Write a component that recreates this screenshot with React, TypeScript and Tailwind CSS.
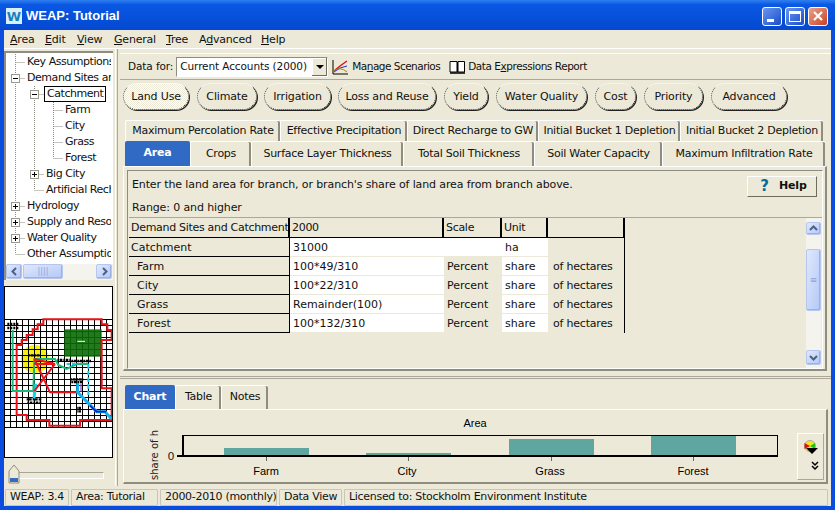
import type { ReactNode } from 'react';

// ── tree ────────────────────────────────────────────────
type TreeRow = {
  label: string;
  textX: number;
  full?: number[];
  half?: number[];
  conn?: [number, number];
  box?: { x: number; open: boolean };
  selected?: boolean;
};

const TREE: TreeRow[] = [
  { label: 'Key Assumptions', textX: 27, full: [15], conn: [15, 25] },
  { label: 'Demand Sites and Catchments', textX: 27, full: [15], conn: [15, 25], box: { x: 15, open: true } },
  { label: 'Catchment', textX: 46, full: [15, 34], conn: [34, 44], box: { x: 34, open: true }, selected: true },
  { label: 'Farm', textX: 65, full: [15, 34, 53], conn: [53, 63] },
  { label: 'City', textX: 65, full: [15, 34, 53], conn: [53, 63] },
  { label: 'Grass', textX: 65, full: [15, 34, 53], conn: [53, 63] },
  { label: 'Forest', textX: 65, full: [15, 34], half: [53], conn: [53, 63] },
  { label: 'Big City', textX: 46, full: [15, 34], conn: [34, 44], box: { x: 34, open: false } },
  { label: 'Artificial Recharge', textX: 46, full: [15], half: [34], conn: [34, 44] },
  { label: 'Hydrology', textX: 27, full: [15], conn: [15, 25], box: { x: 15, open: false } },
  { label: 'Supply and Resources', textX: 27, full: [15], conn: [15, 25], box: { x: 15, open: false } },
  { label: 'Water Quality', textX: 27, full: [15], conn: [15, 25], box: { x: 15, open: false } },
  { label: 'Other Assumptions', textX: 27, half: [15], conn: [15, 25] },
];

function TreeLine({ row }: { row: TreeRow }) {
  // row x values are window pixels, the tree's content starts at x=6
  const ox = (x: number) => x - 5.5;
  return (
    <div className="flex h-4 items-center whitespace-nowrap tracking-[-0.45px]">
      <svg width={row.textX - 8} height={16} className="shrink-0">
        {(row.full ?? []).map((x) => (
          <line key={x} x1={ox(x)} y1={0} x2={ox(x)} y2={16} stroke="#8a8a80" strokeDasharray="1 1" />
        ))}
        {(row.half ?? []).map((x) => (
          <line key={x} x1={ox(x)} y1={0} x2={ox(x)} y2={8} stroke="#8a8a80" strokeDasharray="1 1" />
        ))}
        {row.conn ? (
          <line x1={ox(row.conn[0])} y1={8.5} x2={ox(row.conn[1])} y2={8.5} stroke="#8a8a80" strokeDasharray="1 1" />
        ) : null}
        {row.box ? (
          <g>
            <rect x={ox(row.box.x) - 4} y={4.5} width={8} height={8} fill="#fff" stroke="#9a9a8c" />
            <line x1={ox(row.box.x) - 2.5} y1={8.5} x2={ox(row.box.x) + 2.5} y2={8.5} stroke="#000" />
            {row.box.open ? null : <line x1={ox(row.box.x)} y1={6} x2={ox(row.box.x)} y2={11} stroke="#000" />}
          </g>
        ) : null}
      </svg>
      <span className={row.selected ? 'border border-black px-[2px] leading-[14px]' : 'pl-[2px]'}>{row.label}</span>
    </div>
  );
}

function XpArrow({ dir }: { dir: 'up' | 'down' | 'left' | 'right' }) {
  const d = {
    up: 'M2 7 L5.5 3.5 L9 7',
    down: 'M2 4 L5.5 7.5 L9 4',
    left: 'M7 2 L3.5 5.5 L7 9',
    right: 'M4 2 L7.5 5.5 L4 9',
  }[dir];
  return (
    <svg width={11} height={11}>
      <path d={d} fill="none" stroke="#4d6185" strokeWidth={2} />
    </svg>
  );
}

const SB_BTN =
  'flex items-center justify-center rounded-[2px] border border-[#b5c7ee] bg-gradient-to-br from-[#dfe8fd] to-[#b4c8f6] shadow-[inset_-1px_-1px_0_#9db2e3]';

// ── map thumbnail, coordinates follow the 3x crop of the picture ─────────
function MapThumb() {
  const xs = Array.from({ length: 19 }, (_, i) => 13.5 + i * 18);
  const ys = Array.from({ length: 19 }, (_, i) => 103.5 + i * 18);
  const labels = [
    [22, 117, 56], [22, 129, 56], [86, 211, 122], [172, 225, 212], [214, 228, 274],
    [212, 283, 250], [214, 291, 248], [80, 343, 124], [82, 353, 126], [228, 369, 248], [228, 379, 248],
  ];
  return (
    <svg viewBox="12 3 327 516" className="h-full w-full">
      <rect x={12} y={3} width={327} height={516} fill="#fff" />
      <circle cx={105} cy={222} r={42} fill="#f5ef14" />
      {xs.map((x) => (
        <line key={x} x1={x} y1={103} x2={x} y2={427} stroke="#000" strokeWidth={3} />
      ))}
      {ys.map((y) => (
        <line key={y} x1={14} y1={y} x2={337} y2={y} stroke="#000" strokeWidth={3} />
      ))}
      <rect x={193} y={133} width={112} height={82} fill="#0b6b05" fillOpacity={0.9} />
      <path d="M232 169 H255" stroke="#fff" strokeWidth={3} />
      <path
        d="M130 103 H305 V118 H322 V135 H335 V165 H305 V310 H335 V405 H240 V422 H148 V405 H80 V390 H50 V180 H65 V165 H80 V150 H98 V133 H113 V118 H130 Z"
        fill="none"
        stroke="#e8101a"
        strokeWidth={6}
      />
      <path d="M100 296 H112 L106 342 H98 Z" fill="#16d3e8" />
      <path d="M38 135 V318 H100 L103 222 H165 L175 240 L200 252 L230 237 H265" fill="none" stroke="#18b878" strokeWidth={6} />
      <path
        d="M103 222 L165 237 H103 M103 222 L150 322 H240 M165 237 L103 318"
        fill="none"
        stroke="#f0101a"
        strokeWidth={6}
      />
      <path d="M265 237 V330" fill="none" stroke="#18c8f0" strokeWidth={6} strokeDasharray="14 6" />
      <path d="M200 237 H225" fill="none" stroke="#18c8f0" strokeWidth={6} strokeDasharray="10 6" />
      <path d="M233 295 V322 L290 380 H315 L335 402" fill="none" stroke="#13b4ee" strokeWidth={9} />
      <path d="M270 362 L290 380 H318" fill="none" stroke="#1018d8" strokeWidth={5} />
      <path d="M243 296 V320" stroke="#a050d0" strokeWidth={4} />
      {labels.map(([x, y, x2]) => (
        <line key={`${x}-${y}`} x1={x} y1={y} x2={x2} y2={y} stroke="#000" strokeWidth={7} strokeDasharray="5 2 8 3" />
      ))}
      <rect x={13.5} y={4.5} width={324} height={513} fill="none" stroke="#000" strokeWidth={3} />
    </svg>
  );
}

// ── buttons and tabs ─────────────────────────────────────
const PILLS: { label: string; width: string; gap: string; selected?: boolean }[] = [
  { label: 'Land Use', width: 'w-[66px]', gap: 'ml-[3px]', selected: true },
  { label: 'Climate', width: 'w-[60px]', gap: 'ml-[8px]' },
  { label: 'Irrigation', width: 'w-[67px]', gap: 'ml-[7px]' },
  { label: 'Loss and Reuse', width: 'w-[98px]', gap: 'ml-[7px]' },
  { label: 'Yield', width: 'w-[44px]', gap: 'ml-[8px]' },
  { label: 'Water Quality', width: 'w-[91px]', gap: 'ml-[8px]' },
  { label: 'Cost', width: 'w-[41px]', gap: 'ml-[8px]' },
  { label: 'Priority', width: 'w-[59px]', gap: 'ml-[8px]' },
  { label: 'Advanced', width: 'w-[76px]', gap: 'ml-[8px]' },
];

const TOP_TABS = [
  { label: 'Maximum Percolation Rate', width: 'w-[155px]' },
  { label: 'Effective Precipitation', width: 'w-[127px]' },
  { label: 'Direct Recharge to GW', width: 'w-[131px]' },
  { label: 'Initial Bucket 1 Depletion', width: 'w-[142px]' },
  { label: 'Initial Bucket 2 Depletion', width: 'w-[143px]' },
];

const BOTTOM_TABS = [
  { label: 'Area', width: 'w-[65px]', selected: true },
  { label: 'Crops', width: 'w-[61px]' },
  { label: 'Surface Layer Thickness', width: 'w-[152px]' },
  { label: 'Total Soil Thickness', width: 'w-[131px]' },
  { label: 'Soil Water Capacity', width: 'w-[128px]' },
  { label: 'Maximum Infiltration Rate', width: 'w-[163px]' },
];

function Tab({ label, width, selected, height }: { label: string; width: string; selected?: boolean; height: string }) {
  return (
    <div
      className={`flex shrink-0 items-center justify-center whitespace-nowrap rounded-t-[2px] tracking-[-0.25px] ${width} ${height} ${
        selected
          ? 'bg-[#316ac5] font-bold text-white'
          : 'border-l border-t border-l-white border-t-white shadow-[inset_-2px_0_0_#8f8d80]'
      }`}
    >
      {label}
    </div>
  );
}

function HeadCell({ children }: { children: ReactNode }) {
  return (
    <div className="flex h-[19px] items-center overflow-hidden whitespace-nowrap border-r-2 border-black pl-[2px] pt-[2px] tracking-[-0.3px]">
      {children}
    </div>
  );
}

const ROWS = [
  { name: 'Farm', expr: '100*49/310' },
  { name: 'City', expr: '100*22/310' },
  { name: 'Grass', expr: 'Remainder(100)' },
  { name: 'Forest', expr: '100*132/310' },
];

function StatusCell({ children, width }: { children: ReactNode; width: string }) {
  return (
    <div className={`flex h-[17px] shrink-0 items-center whitespace-nowrap rounded-[1px] border border-[#c9c6b4] pl-[4px] tracking-[-0.3px] ${width}`}>
      {children}
    </div>
  );
}

function TitleButton({ children, red }: { children: ReactNode; red?: boolean }) {
  return (
    <div
      className={`flex h-[19px] w-[20px] items-center justify-center rounded-[3px] border border-white ${
        red ? 'bg-gradient-to-br from-[#e8a08a] to-[#c8401c]' : 'bg-gradient-to-br from-[#6a96f0] to-[#1a4cc8]'
      }`}
    >
      {children}
    </div>
  );
}

export default function App() {
  return (
    <div className="flex h-[510px] w-[835px] flex-col overflow-hidden bg-[#0a4be0] font-['DejaVu_Sans',sans-serif] text-[11px] text-[#111]">
      {/* title bar */}
      <div className="flex h-[30px] shrink-0 items-center bg-gradient-to-b from-[#3080f0] from-0% via-[#0a58e4] via-15% to-[#0448d0] pl-[6px] pr-[7px] pt-[2px]">
        <div className="flex h-[16px] w-[16px] items-center justify-center bg-[#d8f0f8] text-[13px] font-bold leading-none text-[#1a7fc0]">W</div>
        <span className="ml-[4px] font-['Liberation_Sans',sans-serif] text-[13px] font-bold text-white">WEAP: Tutorial</span>
        <div className="ml-auto flex gap-[3px]">
          <TitleButton>
            <span className="mr-[4px] mt-[9px] h-[3px] w-[7px] bg-white" />
          </TitleButton>
          <TitleButton>
            <span className="h-[11px] w-[12px] border border-t-[3px] border-white" />
          </TitleButton>
          <TitleButton red>
            <svg width={12} height={12}>
              <path d="M2 2 L10 10 M10 2 L2 10" stroke="#fff" strokeWidth={2.2} />
            </svg>
          </TitleButton>
        </div>
      </div>

      <div className="mx-[4px] flex min-h-0 flex-1 flex-col bg-[#ece9d8]">
        {/* menu */}
        <div className="flex h-[18px] shrink-0 items-center pl-[6px] pt-[2px] tracking-[-0.2px]">
          <span className="w-[35px]"><u>A</u>rea</span>
          <span className="w-[32px]"><u>E</u>dit</span>
          <span className="w-[37px]"><u>V</u>iew</span>
          <span className="w-[52px]"><u>G</u>eneral</span>
          <span className="w-[33px]"><u>T</u>ree</span>
          <span className="w-[62px]">A<u>d</u>vanced</span>
          <span><u>H</u>elp</span>
        </div>
        <div className="h-[1px] shrink-0 bg-white" />

        <div className="flex min-h-0 flex-1">
          {/* left column */}
          <div className="flex w-[109px] shrink-0 flex-col pt-[2px]">
            <div className="flex h-[229px] shrink-0 flex-col border-l-2 border-t-2 border-l-[#8f8d80] border-t-[#8f8d80] bg-white">
              <div className="h-[211px] w-[105px] shrink-0 overflow-hidden pt-[1px]">
                {TREE.map((row) => (
                  <TreeLine key={row.label} row={row} />
                ))}
              </div>
              <div className="flex h-[16px] shrink-0 bg-[#f4f3ee]">
                <div className={`h-[15px] w-[16px] ${SB_BTN}`}>
                  <XpArrow dir="left" />
                </div>
                <div className={`ml-[1px] h-[15px] w-[40px] ${SB_BTN}`}>
                  <span className="text-[8px] leading-none text-[#8ea4d8]">||||</span>
                </div>
                <div className={`ml-auto mr-[1px] h-[15px] w-[16px] ${SB_BTN}`}>
                  <XpArrow dir="right" />
                </div>
              </div>
            </div>
            <div className="mt-[6px] h-[172px] shrink-0">
              <MapThumb />
            </div>
            <div className="relative mt-[6px] h-[22px] shrink-0">
              <div className="absolute left-[9px] top-[8px] h-[7px] w-[91px] border border-b-white border-l-[#a8a698] border-r-white border-t-[#a8a698]" />
              <svg width={12} height={20} className="absolute left-[4px] top-0">
                <path d="M1 7 L6 1 L11 7 V19 H1 Z" fill="#ece9d8" stroke="#8f8d80" />
                <rect x={2} y={14} width={8} height={4} fill="#3a6ac0" />
              </svg>
            </div>
          </div>

          {/* splitter */}
          <div className="mx-[2px] w-[3px] shrink-0 border-l border-r border-l-white border-r-[#aca899]" />

          {/* right column */}
          <div className="flex min-w-0 flex-1 flex-col">
            {/* toolbar */}
            <div className="mt-[4px] flex h-[27px] shrink-0 items-center border-b border-t border-b-[#aca899] border-t-white pl-[8px] text-[10.5px] tracking-[-0.1px]">
              <span>Data for:</span>
              <div className="ml-[3px] flex h-[20px] w-[152px] items-center justify-between border border-b-white border-l-[#8f8d80] border-r-white border-t-[#8f8d80] bg-white pl-[3px]">
                <span className="whitespace-nowrap">Current Accounts (2000)</span>
                <div className="flex h-[18px] w-[15px] items-center justify-center bg-[#ece9d8] shadow-[inset_-1px_-1px_0_#6e6c60,inset_1px_1px_0_#fff]">
                  <span className="h-0 w-0 border-x-[4px] border-t-[4px] border-x-transparent border-t-black" />
                </div>
              </div>
              <svg width={16} height={16} className="ml-[4px]">
                <path d="M1 1 V15 H16" fill="none" stroke="#000" />
                <path d="M2 12 L8 7 L15 2" fill="none" stroke="#e01010" strokeWidth={1.4} />
                <path d="M2 13 L8 9 L15 7" fill="none" stroke="#2030d0" />
                <path d="M2 12 Q8 7 15 13" fill="none" stroke="#a08a00" />
              </svg>
              <span className="ml-[4px] whitespace-nowrap tracking-[-0.52px]">Ma<u>n</u>age Scenarios</span>
              <svg width={17} height={14} className="ml-[9px]">
                <path d="M1 1.5 H8 V12 H1 Z M9 1.5 H15.5 V12 H9 Z" fill="#fff" stroke="#000" />
                <path d="M1 13 H16" stroke="#000" strokeWidth={1.5} />
                <path d="M8.5 2 V12" stroke="#000" />
              </svg>
              <span className="ml-[2px] whitespace-nowrap tracking-[-0.45px]">Data E<u>x</u>pressions Report</span>
            </div>

            {/* pills */}
            <div className="flex h-[40px] shrink-0 items-start pt-[3px]">
              {PILLS.map((p) => (
                <div
                  key={p.label}
                  className={`flex h-[27px] shrink-0 items-center justify-center whitespace-nowrap rounded-full border border-dotted border-b-[#222] border-l-[#555] border-r-[#222] border-t-white pt-[2px] tracking-[-0.15px] shadow-[1px_1px_0_#222] ${p.width} ${p.gap} ${
                    p.selected ? 'bg-[repeating-conic-gradient(#ffffff_0_25%,#ece9d8_0_50%)] bg-[length:2px_2px]' : ''
                  }`}
                >
                  {p.label}
                </div>
              ))}
            </div>

            {/* tabs */}
            <div className="ml-[5px] flex shrink-0">
              {TOP_TABS.map((t) => (
                <Tab key={t.label} label={t.label} width={t.width} height="h-[21px]" />
              ))}
            </div>
            <div className="ml-[5px] flex shrink-0">
              {BOTTOM_TABS.map((t) => (
                <Tab key={t.label} label={t.label} width={t.width} selected={t.selected} height="h-[25px]" />
              ))}
            </div>

            {/* upper panel */}
            <div className="ml-[3px] flex h-[205px] w-[704px] shrink-0 flex-col border-b-2 border-l border-r-2 border-t border-b-[#8f8d80] border-l-white border-r-[#8f8d80] border-t-white pl-[3px] pr-[2px] pt-[3px]">
              <div className="flex min-h-0 flex-1 flex-col border border-b-white border-l-[#8f8d80] border-r-white border-t-[#8f8d80] pl-[1px]">
                <div className="relative h-[47px] shrink-0 border-b border-b-[#aca899] pl-[3px] pt-[6px] tracking-[-0.12px]">
                  <div className="leading-[15px]">Enter the land area for branch, or branch's share of land area from branch above.</div>
                  <div className="mt-[8px] leading-[15px]">Range: 0 and higher</div>
                  <div className="absolute right-[5px] top-[5px] flex h-[21px] w-[70px] items-center justify-center gap-[10px] border border-b-[#6e6c60] border-l-white border-r-[#6e6c60] border-t-white pl-[3px] font-bold">
                    <span className="text-[15px] font-bold leading-none text-[#0a6a9a]">?</span>
                    <span>Help</span>
                  </div>
                </div>
                <div className="flex min-h-0 flex-1">
                  <div className="grid w-[496px] shrink-0 grid-cols-[161px_154px_58px_46px_77px] content-start">
                    <HeadCell>Demand Sites and Catchment</HeadCell>
                    <HeadCell>2000</HeadCell>
                    <HeadCell>Scale</HeadCell>
                    <HeadCell>Unit</HeadCell>
                    <HeadCell>&nbsp;</HeadCell>
                    <div className="col-span-5 h-[1px] bg-black" />

                    <div className="flex h-[19px] items-center border-b border-r border-black pl-[2px] pt-[2px]">Catchment</div>
                    <div className="col-span-3 flex h-[19px] items-center border-b border-[#ece9d8] bg-white pt-[2px]">
                      <span className="w-[212px] pl-[3px]">31000</span>
                      <span className="pl-[3px]">ha</span>
                    </div>
                    <div className="border-r border-black" />

                    {ROWS.map((r) => (
                      <div key={r.name} className="contents">
                        <div className="flex h-[19px] items-center border-b border-r border-black pl-[8px] pt-[2px]">{r.name}</div>
                        <div className="flex h-[19px] items-center border-b border-[#ece9d8] bg-white pl-[3px] pt-[2px]">{r.expr}</div>
                        <div className="flex h-[19px] items-center pl-[3px] pt-[2px]">Percent</div>
                        <div className="flex h-[19px] items-center border-b border-[#ece9d8] bg-white pl-[3px] pt-[2px]">share</div>
                        <div className="flex h-[19px] items-center whitespace-nowrap border-r border-black pl-[5px] pt-[2px] tracking-[-0.2px]">of hectares</div>
                      </div>
                    ))}
                  </div>
                  <div className="ml-auto mr-[1px] flex w-[15px] shrink-0 flex-col bg-[#f4f3ee] pb-[3px] pt-[4px]">
                    <div className={`h-[13px] shrink-0 ${SB_BTN}`}>
                      <XpArrow dir="up" />
                    </div>
                    <div className={`mt-[14px] h-[62px] shrink-0 ${SB_BTN}`}>
                      <span className="text-[9px] leading-none text-[#8ea4d8]">≡</span>
                    </div>
                    <div className={`mt-auto h-[15px] shrink-0 ${SB_BTN}`}>
                      <XpArrow dir="down" />
                    </div>
                  </div>
                </div>
              </div>
            </div>

            {/* horizontal splitter */}
            <div className="mt-[5px] h-[3px] w-full shrink-0 border-y border-y-[#aca899]" />

            {/* lower tabs */}
            <div className="ml-[5px] mt-[6px] flex shrink-0">
              <Tab label="Chart" width="w-[50px]" selected height="h-[24px]" />
              <Tab label="Table" width="w-[46px]" height="h-[24px]" />
              <Tab label="Notes" width="w-[47px]" height="h-[24px]" />
            </div>

            {/* lower panel */}
            <div className="ml-[3px] flex h-[75px] w-[705px] shrink-0 border-b-2 border-l border-r-2 border-t border-b-[#8f8d80] border-l-white border-r-[#8f8d80] border-t-white">
              <svg width={670} height={72} className="shrink-0 font-['Liberation_Sans',sans-serif]">
                <text x={351} y={17} fontSize={11} textAnchor="middle" fill="#000">Area</text>
                <text transform="translate(34 70) rotate(-90)" fontSize={10} fill="#222" fontFamily="DejaVu Sans">share of h</text>
                <text x={47} y={50} fontSize={11} textAnchor="middle" fill="#222" fontFamily="DejaVu Sans">0</text>
                <rect x={58.5} y={25.5} width={595} height={20} fill="none" stroke="#000" />
                <path d="M59 25 V47 M53 46 H654" stroke="#000" strokeWidth={2} fill="none" />
                <rect x={100} y={38} width={85} height={7} fill="#5fa5a0" />
                <rect x={242} y={43} width={85} height={2} fill="#5fa5a0" />
                <rect x={385} y={29} width={85} height={16} fill="#5fa5a0" />
                <rect x={527} y={26} width={85} height={19} fill="#5fa5a0" />
                <path d="M142.5 47 V51 M284.5 47 V51 M427.5 47 V51 M569.5 47 V51" stroke="#666" />
                <text x={142} y={65} fontSize={11} textAnchor="middle" fill="#000">Farm</text>
                <text x={283} y={65} fontSize={11} textAnchor="middle" fill="#000">City</text>
                <text x={426} y={65} fontSize={11} textAnchor="middle" fill="#000">Grass</text>
                <text x={569} y={65} fontSize={11} textAnchor="middle" fill="#000">Forest</text>
              </svg>
              <div className="ml-[3px] mt-[23px] flex h-[47px] w-[27px] shrink-0 flex-col items-center border border-b-[#aca899] border-l-white border-r-[#aca899] border-t-white">
                <svg width={16} height={16} className="mt-[5px]">
                  <circle cx={7} cy={7} r={5.5} fill="#f0e820" stroke="#aaa" />
                  <path d="M7 7 L1.5 4 V10 Z" fill="#e01010" />
                  <path d="M7 7 L12 4 V10 Z" fill="#20c020" />
                  <path d="M3 9 H15 L9 15 Z" fill="#000" />
                </svg>
                <svg width={8} height={10} className="ml-[8px] mt-[6px]">
                  <path d="M1 1 L4 4 L7 1 M1 5 L4 8 L7 5" fill="none" stroke="#000" strokeWidth={1.5} />
                </svg>
              </div>
            </div>
          </div>
        </div>

        {/* status bar */}
        <div className="flex h-[20px] shrink-0 items-center gap-[2px] pl-[1px] pt-[2px]">
          <StatusCell width="w-[64px]">WEAP: 3.4</StatusCell>
          <StatusCell width="w-[87px]">Area: Tutorial</StatusCell>
          <StatusCell width="w-[117px]">2000-2010 (monthly)</StatusCell>
          <StatusCell width="w-[63px]">Data View</StatusCell>
          <StatusCell width="w-[484px]">Licensed to: Stockholm Environment Institute</StatusCell>
        </div>
      </div>
      <div className="h-[4px] shrink-0" />
    </div>
  );
}
